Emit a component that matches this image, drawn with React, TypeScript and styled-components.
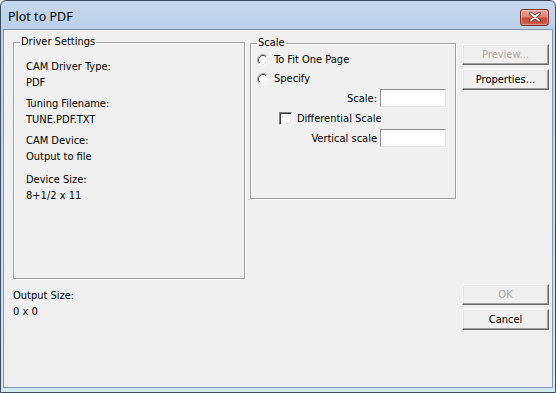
import React from 'react'
import styled, {createGlobalStyle} from 'styled-components'

const GlobalStyle = createGlobalStyle`
  html, body {
    margin: 0;
    padding: 0;
    background: #ffffff;
  }
  body {
    font-family: 'DejaVu Sans Condensed', 'DejaVu Sans', sans-serif;
    font-size: 11px;
    color: #000;
  }
`

const Window = styled.div`
  width: 556px;
  height: 393px;
  box-sizing: border-box;
  border: 1px solid #3d4c60;
  border-radius: 6px 6px 0 0;
  padding: 0 2px 4px;
  display: flex;
  flex-direction: column;
  background: linear-gradient(
    to bottom,
    #c6d8ed 0,
    #bbd0e9 28px,
    #c6daee 200px,
    #d2e9f0 100%
  );
`

const TitleBar = styled.div`
  height: 28px;
  display: flex;
  align-items: center;
  justify-content: space-between;
  padding: 0 4px 0 5px;
`

const Title = styled.span`
  font-family: 'Noto Sans', 'Open Sans', sans-serif;
  font-size: 12.5px;
  color: #000;
  margin-top: 3px;
`

const CloseButton = styled.div`
  width: 29px;
  height: 17px;
  box-sizing: border-box;
  margin-top: 4px;
  border: 1px solid #7a2f27;
  border-radius: 3px;
  display: flex;
  align-items: center;
  justify-content: center;
  background: linear-gradient(
    to bottom,
    #e9a99c 0,
    #dc8171 45%,
    #c8483a 55%,
    #d0604c 100%
  );
  box-shadow: inset 0 0 0 1px rgba(255, 255, 255, 0.35);
`

const Client = styled.div`
  flex: 1;
  border: 1px solid #7e95ad;
  background: #f0f0f0;
  padding: 12px 0 0 9px;
  display: flex;
  flex-direction: column;
`

const Row = styled.div`
  display: flex;
  align-items: flex-start;
`

const Group = styled.div<{$w: number; $h: number; $top?: number; $left?: number}>`
  position: relative;
  box-sizing: border-box;
  width: ${p => p.$w}px;
  height: ${p => p.$h}px;
  margin-top: ${p => p.$top ?? 0}px;
  margin-left: ${p => p.$left ?? 0}px;
  border: 1px solid #a0a0a0;
  box-shadow: 1px 1px 0 #ffffff, inset 1px 1px 0 #ffffff;
`

const Caption = styled.span`
  position: absolute;
  top: -8px;
  left: 6px;
  padding: 0 1px;
  line-height: 14px;
  background: #f0f0f0;
`

const DriverBody = styled.div`
  padding: 16px 0 0 12px;
  display: flex;
  flex-direction: column;
`

const Field = styled.div<{$after?: number}>`
  display: flex;
  flex-direction: column;
  margin-bottom: ${p => p.$after ?? 0}px;
`

const Line = styled.div`
  line-height: 16px;
  white-space: nowrap;
`

const ScaleBody = styled.div`
  padding: 6px 9px 0 6px;
  display: flex;
  flex-direction: column;
`

const OptionRow = styled.label<{$h: number; $indent?: number}>`
  height: ${p => p.$h}px;
  display: flex;
  align-items: center;
  gap: 5px;
  padding-left: ${p => p.$indent ?? 0}px;
  white-space: nowrap;
`

const EntryRow = styled.div`
  height: 20px;
  display: flex;
  align-items: center;
  justify-content: flex-end;
  gap: 3px;
`

const TextBox = styled.div`
  width: 66px;
  height: 18px;
  box-sizing: border-box;
  background: #fff;
  border: 1px solid;
  border-color: #8e8f8f #e3e3e3 #e3e3e3 #8e8f8f;
`

const CheckBox = styled.span`
  width: 13px;
  height: 13px;
  box-sizing: border-box;
  background: #fff;
  border: 1px solid;
  border-color: #808080 #ffffff #ffffff #808080;
  box-shadow: inset 1px 1px 0 #404040, inset -1px -1px 0 #e3e3e3;
`

const ButtonColumn = styled.div<{$top: number; $left?: number}>`
  display: flex;
  flex-direction: column;
  gap: 4px;
  padding-top: ${p => p.$top}px;
  margin-left: ${p => p.$left ?? 0}px;
`

const Button = styled.button`
  width: 87px;
  height: 21px;
  box-sizing: border-box;
  padding: 0;
  font: inherit;
  color: #000;
  background: #f0f0f0;
  border: 1px solid;
  border-color: #ffffff #696969 #696969 #ffffff;
  box-shadow: inset -1px -1px 0 #a0a0a0, inset 1px 1px 0 #e3e3e3;

  &:disabled {
    color: #a8a8a8;
  }
`

const OutputBlock = styled.div`
  width: 449px;
  padding-top: 9px;
`

function Radio() {
  return (
    <svg width="12" height="12" viewBox="0 0 12 12">
      <circle cx="6" cy="6" r="5.5" fill="#fff" />
      <path d="M9.9 2.1 A5.5 5.5 0 0 0 2.1 9.9" stroke="#a0a0a0" fill="none" />
      <path d="M9.2 2.8 A4.5 4.5 0 0 0 2.8 9.2" stroke="#404040" fill="none" />
      <path d="M2.1 9.9 A5.5 5.5 0 0 0 9.9 2.1" stroke="#ffffff" fill="none" />
      <path d="M2.8 9.2 A4.5 4.5 0 0 0 9.2 2.8" stroke="#e3e3e3" fill="none" />
    </svg>
  )
}

function CloseGlyph() {
  return (
    <svg width="12" height="10" viewBox="0 0 12 10">
      <path d="M2 1.5 L10 8.5 M10 1.5 L2 8.5" stroke="#5a1e17" strokeWidth="3.6" strokeLinecap="round" />
      <path d="M2 1.5 L10 8.5 M10 1.5 L2 8.5" stroke="#ffffff" strokeWidth="2" strokeLinecap="round" />
    </svg>
  )
}

export default function App() {
  return (
    <>
      <GlobalStyle />
      <Window>
        <TitleBar>
          <Title>Plot to PDF</Title>
          <CloseButton>
            <CloseGlyph />
          </CloseButton>
        </TitleBar>
        <Client>
          <Row>
            <Group $w={232} $h={237}>
              <Caption>Driver Settings</Caption>
              <DriverBody>
                <Field $after={5}>
                  <Line>CAM Driver Type:</Line>
                  <Line>PDF</Line>
                </Field>
                <Field $after={5}>
                  <Line>Tuning Filename:</Line>
                  <Line>TUNE.PDF.TXT</Line>
                </Field>
                <Field $after={7}>
                  <Line>CAM Device:</Line>
                  <Line>Output to file</Line>
                </Field>
                <Field>
                  <Line>Device Size:</Line>
                  <Line>8+1/2 x 11</Line>
                </Field>
              </DriverBody>
            </Group>
            <Group $w={206} $h={156} $top={1} $left={5}>
              <Caption>Scale</Caption>
              <ScaleBody>
                <OptionRow $h={19}>
                  <Radio />
                  To Fit One Page
                </OptionRow>
                <OptionRow $h={19}>
                  <Radio />
                  Specify
                </OptionRow>
                <EntryRow>
                  Scale:
                  <TextBox />
                </EntryRow>
                <OptionRow $h={20} $indent={22}>
                  <CheckBox />
                  Differential Scale
                </OptionRow>
                <EntryRow>
                  Vertical scale
                  <TextBox />
                </EntryRow>
              </ScaleBody>
            </Group>
            <ButtonColumn $top={2} $left={6}>
              <Button disabled>Preview...</Button>
              <Button>Properties...</Button>
            </ButtonColumn>
          </Row>
          <Row>
            <OutputBlock>
              <Line>Output Size:</Line>
              <Line>0 x 0</Line>
            </OutputBlock>
            <ButtonColumn $top={5}>
              <Button disabled>OK</Button>
              <Button>Cancel</Button>
            </ButtonColumn>
          </Row>
        </Client>
      </Window>
    </>
  )
}
